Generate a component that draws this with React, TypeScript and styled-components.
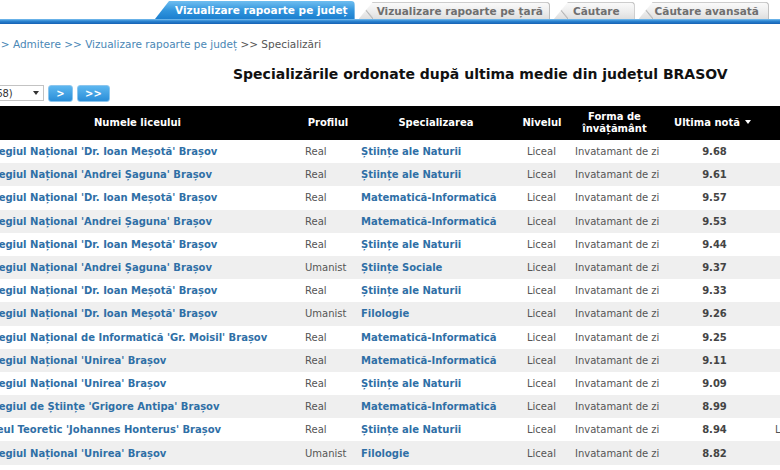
import React from "react";
import styled, { createGlobalStyle } from "styled-components";

type Row = {
  name: string;
  profile: string;
  spec: string;
  grade: string;
  extra?: string;
};

const rows: Row[] = [
  { name: "Colegiul Național 'Dr. Ioan Meșotă' Brașov", profile: "Real", spec: "Științe ale Naturii", grade: "9.68" },
  { name: "Colegiul Național 'Andrei Șaguna' Brașov", profile: "Real", spec: "Științe ale Naturii", grade: "9.61" },
  { name: "Colegiul Național 'Dr. Ioan Meșotă' Brașov", profile: "Real", spec: "Matematică-Informatică", grade: "9.57" },
  { name: "Colegiul Național 'Andrei Șaguna' Brașov", profile: "Real", spec: "Matematică-Informatică", grade: "9.53" },
  { name: "Colegiul Național 'Dr. Ioan Meșotă' Brașov", profile: "Real", spec: "Științe ale Naturii", grade: "9.44" },
  { name: "Colegiul Național 'Andrei Șaguna' Brașov", profile: "Umanist", spec: "Științe Sociale", grade: "9.37" },
  { name: "Colegiul Național 'Dr. Ioan Meșotă' Brașov", profile: "Real", spec: "Științe ale Naturii", grade: "9.33" },
  { name: "Colegiul Național 'Dr. Ioan Meșotă' Brașov", profile: "Umanist", spec: "Filologie", grade: "9.26" },
  { name: "Colegiul Național de Informatică 'Gr. Moisil' Brașov", profile: "Real", spec: "Matematică-Informatică", grade: "9.25" },
  { name: "Colegiul Național 'Unirea' Brașov", profile: "Real", spec: "Matematică-Informatică", grade: "9.11" },
  { name: "Colegiul Național 'Unirea' Brașov", profile: "Real", spec: "Științe ale Naturii", grade: "9.09" },
  { name: "Colegiul de Științe 'Grigore Antipa' Brașov", profile: "Real", spec: "Matematică-Informatică", grade: "8.99" },
  { name: "Liceul Teoretic 'Johannes Honterus' Brașov", profile: "Real", spec: "Științe ale Naturii", grade: "8.94", extra: "Limba germană" },
  { name: "Colegiul Național 'Unirea' Brașov", profile: "Umanist", spec: "Filologie", grade: "8.82" },
];

const GlobalStyle = createGlobalStyle`
  html, body {
    margin: 0;
    padding: 0;
    background: #fff;
    overflow: hidden;
  }
  body {
    font-family: "DejaVu Sans", Verdana, sans-serif;
    font-size: 10px;
    color: #555;
  }
`;

const Page = styled.div`
  width: 780px;
  height: 470px;
  overflow: hidden;
`;

const TabStrip = styled.div`
  display: flex;
  align-items: flex-end;
  gap: 4px;
  height: 19px;
  padding-left: 155px;
`;

const Tab = styled.div<{ $active?: boolean; $padL?: number; $padR?: number }>`
  position: relative;
  height: ${(p) => (p.$active ? "18px" : "17px")};
  padding: 0 ${(p) => p.$padR ?? 8}px 0 ${(p) => p.$padL ?? 19}px;
  display: flex;
  align-items: center;
  font-weight: bold;
  font-size: 10.5px;
  white-space: nowrap;
  color: ${(p) => (p.$active ? "#fff" : "#6f6f6f")};
  background: ${(p) =>
    p.$active
      ? "linear-gradient(#6fbef0, #2f93dc 55%, #1c7fcf)"
      : "linear-gradient(#fbfbfb, #ececec 60%, #dedede)"};
  border-top-right-radius: 4px;
  box-shadow: ${(p) => (p.$active ? "none" : "inset -1px 0 0 #b9b9b9, inset 0 1px 0 #cdcdcd")};
  clip-path: polygon(14px 0, 100% 0, 100% 100%, 0 100%);

  &::after {
    content: "";
    position: absolute;
    left: 0;
    top: 0;
    width: 14px;
    height: 100%;
    background: ${(p) =>
      p.$active
        ? "none"
        : "linear-gradient(to top right, transparent 46%, #b5b5b5 50%, transparent 56%)"};
  }
`;

const BlueRule = styled.div`
  height: 5px;
  background: linear-gradient(#7cc0ef, #2d86d2 40%, #1561b4);
`;

const Crumbs = styled.div`
  margin: 14px 0 0 -8px;
  height: 13px;
  line-height: 13px;
  font-size: 10.5px;
  white-space: nowrap;
`;

const CrumbLink = styled.span`
  color: #4a87b5;
`;

const CrumbCurrent = styled.span`
  color: #555;
`;

const Title = styled.h1`
  margin: 15px 0 0 233px;
  font-size: 14px;
  line-height: 17px;
  font-weight: bold;
  color: #111;
  white-space: nowrap;
`;

const Controls = styled.div`
  display: flex;
  align-items: center;
  gap: 4px;
  margin: 1px 0 0 -47px;
  height: 18px;
`;

const Select = styled.div`
  width: 91px;
  height: 16px;
  border: 1px solid #c3c3c3;
  box-sizing: border-box;
  display: flex;
  align-items: center;
  justify-content: space-between;
  padding: 0 4px 0 6px;
  font-size: 10px;
  color: #333;
  background: #fff;

  &::after {
    content: "";
    border-left: 3px solid transparent;
    border-right: 3px solid transparent;
    border-top: 4px solid #333;
  }
`;

const PageButton = styled.div<{ $w: number }>`
  width: ${(p) => p.$w}px;
  height: 17px;
  box-sizing: border-box;
  border: 1px solid #8cc6ee;
  border-radius: 3px;
  background: linear-gradient(#5db7f0, #2a8ed8);
  color: #fff;
  font-weight: bold;
  font-size: 10px;
  display: flex;
  align-items: center;
  justify-content: center;
`;

const Table = styled.table`
  margin: 4px 0 0 -24px;
  border-collapse: collapse;
  table-layout: fixed;
  width: 880px;
`;

const HeadCell = styled.th`
  background: #000;
  color: #fff;
  font-weight: bold;
  font-size: 10px;
  line-height: 12px;
  height: 34px;
  padding: 0 4px;
  text-align: center;
  white-space: nowrap;
`;

const SortArrow = styled.span`
  display: inline-block;
  margin-left: 5px;
  vertical-align: 2px;
  border-left: 3px solid transparent;
  border-right: 3px solid transparent;
  border-top: 4px solid #fff;
`;

const BodyRow = styled.tr<{ $odd: boolean }>`
  height: 23.2px;
  background: ${(p) => (p.$odd ? "#efefef" : "#fff")};
`;

const Cell = styled.td<{ $align?: "left" | "center"; $pad?: number }>`
  padding: 0 2px 0 ${(p) => p.$pad ?? 6}px;
  text-align: ${(p) => p.$align ?? "left"};
  white-space: nowrap;
  overflow: hidden;
  font-size: 10px;
  color: #555;
`;

const LinkText = styled.span`
  color: #2f6fa6;
  font-weight: bold;
`;

const Grade = styled.span`
  color: #444;
  font-weight: bold;
`;

export default function App() {
  return (
    <Page>
      <GlobalStyle />
      <TabStrip>
        <Tab $active $padL={20} $padR={7}>
          Vizualizare rapoarte pe județ
        </Tab>
        <Tab $padL={18} $padR={7}>
          Vizualizare rapoarte pe țară
        </Tab>
        <Tab $padL={19} $padR={15}>
          Căutare
        </Tab>
        <Tab $padL={16} $padR={10}>
          Căutare avansată
        </Tab>
      </TabStrip>
      <BlueRule />
      <Crumbs>
        <CrumbLink>&gt;&gt; Admitere</CrumbLink> <CrumbLink>&gt;&gt; Vizualizare rapoarte pe județ</CrumbLink>{" "}
        <CrumbCurrent>&gt;&gt; Specializări</CrumbCurrent>
      </Crumbs>
      <Title>Specializările ordonate după ultima medie din județul BRASOV</Title>
      <Controls>
        <Select>1 - 20 (68)</Select>
        <PageButton $w={25}>&gt;</PageButton>
        <PageButton $w={33}>&gt;&gt;</PageButton>
      </Controls>
      <Table>
        <colgroup>
          <col style={{ width: 323 }} />
          <col style={{ width: 58 }} />
          <col style={{ width: 158 }} />
          <col style={{ width: 54 }} />
          <col style={{ width: 91 }} />
          <col style={{ width: 105 }} />
          <col style={{ width: 91 }} />
        </colgroup>
        <thead>
          <tr>
            <HeadCell>Numele liceului</HeadCell>
            <HeadCell>Profilul</HeadCell>
            <HeadCell>Specializarea</HeadCell>
            <HeadCell>Nivelul</HeadCell>
            <HeadCell>
              Forma de
              <br />
              învățământ
            </HeadCell>
            <HeadCell>
              Ultima notă
              <SortArrow />
            </HeadCell>
            <HeadCell />
          </tr>
        </thead>
        <tbody>
          {rows.map((r, i) => (
            <BodyRow key={i} $odd={i % 2 === 1}>
              <Cell $pad={5}>
                <LinkText>{r.name}</LinkText>
              </Cell>
              <Cell>{r.profile}</Cell>
              <Cell $pad={4}>
                <LinkText>{r.spec}</LinkText>
              </Cell>
              <Cell $pad={12}>Liceal</Cell>
              <Cell $pad={6}>Invatamant de zi</Cell>
              <Cell $align="center">
                <Grade>{r.grade}</Grade>
              </Cell>
              <Cell $pad={10}>{r.extra ?? ""}</Cell>
            </BodyRow>
          ))}
        </tbody>
      </Table>
    </Page>
  );
}
